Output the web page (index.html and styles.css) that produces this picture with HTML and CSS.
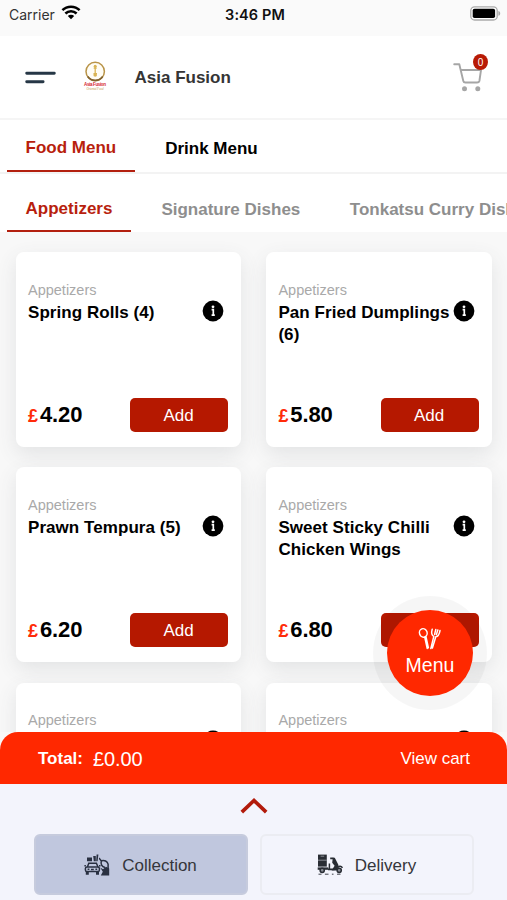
FILE: index.html
```html
<!DOCTYPE html>
<html lang="en">
<head>
<meta charset="utf-8">
<title>Asia Fusion</title>
<link rel="stylesheet" href="styles.css">
</head>
<body>
<svg class="defs" aria-hidden="true">
  <symbol id="info" viewBox="0 0 22 22">
    <circle cx="11" cy="11" r="10.4" fill="#000"/>
    <circle cx="11" cy="6.8" r="1.4" fill="#fff"/>
    <path d="M9.6 9.7h1.7v5.3M9.6 15.2h3.2" fill="none" stroke="#fff" stroke-width="1.7"/>
  </symbol>
</svg>
<div class="app">
  <div class="status">
    <div class="carrier"><span>Carrier</span>
      <svg width="20" height="15" viewBox="0 0 20 15" fill="none" stroke="#000" stroke-width="2.5"><path d="M1.4 5.2a12.2 12.2 0 0 1 17.2 0M4.4 8.5a7.9 7.9 0 0 1 11.2 0"/><path d="M10 14.3 6.8 11a4.5 4.5 0 0 1 6.4 0z" fill="#000" stroke="none"/></svg>
    </div>
    <div class="clock">3:46 PM</div>
    <svg class="battery" width="31" height="15" viewBox="0 0 31 15"><rect x=".8" y=".8" width="26.4" height="13.2" rx="3.8" fill="#fff" stroke="#aaa" stroke-width="1.3"/><rect x="2.7" y="2.7" width="22.4" height="9.4" rx="1.8"/><path d="M28.4 5c2.4.6 2.4 4.2 0 4.8z" fill="#aaa"/></svg>
  </div>
  <header class="header">
    <svg width="31" height="13" viewBox="0 0 31 13" stroke="#263746" stroke-width="2.9" stroke-linecap="round"><path d="M1.7 2.2h27.6M1.7 10.8h16.4"/></svg>
    <svg class="logo" width="24" height="30" viewBox="0 0 24 30">
      <circle cx="12.2" cy="10.5" r="9.2" fill="#fffdf5" stroke="#b99448" stroke-width="1.5"/>
      <path d="M4.7 15.6a9.2 9.2 0 0 0 15 0" fill="none" stroke="#7f602d" stroke-width="1.7"/>
      <path d="M12.2 4.2v10.2M10.7 7.1h3M10.5 12.6h3.5" stroke="#d9b455" stroke-width="1.3"/>
      <circle cx="12.2" cy="5.2" r="1.5" fill="#d9b455"/><circle cx="12.2" cy="14" r="1.8" fill="#d9b455"/>
      <text x="12" y="24.6" text-anchor="middle" textLength="22" class="logo-name">Asia Fusion</text>
      <text x="12" y="29" text-anchor="middle" textLength="17" class="logo-sub">Oriental Food</text>
    </svg>
    <h1>Asia Fusion</h1>
    <div class="cart">
      <svg width="31" height="30" viewBox="0 0 31 30" fill="none" stroke="#a6a6a6" stroke-width="1.9" stroke-linejoin="round" stroke-linecap="round"><path d="M1.2 2.2h5.1l4 16.8c.3 1.2.9 1.5 2 1.5h11.8c1.2 0 2-.4 2.3-1.5L28 8H7.8"/><g fill="#a6a6a6" stroke="none"><circle cx="11.5" cy="26.8" r="2.5"/><circle cx="24.8" cy="26.8" r="2.5"/></g></svg>
      <span class="badge">0</span>
    </div>
  </header>
  <nav class="tabs main"><a class="tab active">Food Menu</a><a class="tab">Drink Menu</a></nav>
  <nav class="tabs sub"><a class="tab active">Appetizers</a><a class="tab">Signature Dishes</a><a class="tab">Tonkatsu Curry Dishes</a></nav>
  <main class="list">
    <article class="card"><p class="cat">Appetizers</p><div class="title"><h2>Spring Rolls (4)</h2><svg class="info"><use href="#info"/></svg></div><div class="buy"><p class="price"><span>£</span>4.20</p><button>Add</button></div></article>
    <article class="card"><p class="cat">Appetizers</p><div class="title"><h2>Pan Fried Dumplings (6)</h2><svg class="info"><use href="#info"/></svg></div><div class="buy"><p class="price"><span>£</span>5.80</p><button>Add</button></div></article>
    <article class="card"><p class="cat">Appetizers</p><div class="title"><h2>Prawn Tempura (5)</h2><svg class="info"><use href="#info"/></svg></div><div class="buy"><p class="price"><span>£</span>6.20</p><button>Add</button></div></article>
    <article class="card"><p class="cat">Appetizers</p><div class="title"><h2>Sweet Sticky Chilli Chicken Wings</h2><svg class="info"><use href="#info"/></svg></div><div class="buy"><p class="price"><span>£</span>6.80</p><button>Add</button></div></article>
    <article class="card"><p class="cat">Appetizers</p><div class="title"><svg class="info"><use href="#info"/></svg></div></article>
    <article class="card"><p class="cat">Appetizers</p><div class="title"><svg class="info"><use href="#info"/></svg></div></article>
  </main>
  <footer class="bottom">
    <div class="total"><b>Total:</b><span class="sum">£0.00</span><span class="view">View cart</span></div>
    <div class="options">
      <svg class="chevron" width="28" height="17" viewBox="0 0 28 17" fill="none" stroke="#b21a0b" stroke-width="3.7"><path d="m1.8 15.1 12.2-11.6 12.2 11.6"/></svg>
      <div class="modes">
        <div class="mode selected">
          <svg width="26" height="22" viewBox="0 0 26 22" fill="none" stroke="#293041" stroke-width="1.5">
            <path d="M3.4 13 4.8 9.3h7.6l1.6 3.7"/><rect x="1.4" y="13" width="14" height="4.6" rx="1.6"/>
            <path d="M1.8 17.4h3v3.4h-3zM12 17.4h3v3.4h-3z" fill="#293041" stroke="none"/><path d="M3.6 15.3h1.8M11.4 15.3h1.8M7 15.5h2.8M.4 11.8h1.5M15 11.8h1.5"/>
            <path d="M3 3.4h5v3.8H3zM9.2 2h2.6v5.2H9.8zM12.6.4h1.8l-.8 6.8h-1.4z" fill="#293041" stroke="none"/>
            <path d="M15 4.2c1 .2 1.2 2.3 2.6 2.6 2.8-1 5.7.5 6.5 3.3v5"/><path d="M17.4 7c-1 3 .4 5.8 3.6 6.6"/>
            <path d="M16.2 13.6 19 15.2l3-2.4 3.2 1.8v7h-8.4l2-3.8z" fill="#293041" stroke="none"/>
          </svg><span>Collection</span>
        </div>
        <div class="mode">
          <svg width="26" height="21" viewBox="0 0 26 21" fill="none" stroke="#292d34" stroke-width="1.5">
            <path d="M1 .6h8.8v12H1z" fill="#292d34" stroke="none"/><path d="M3.6 2.2h3.6M1 6.2h8.8" stroke="#b0b3bc" stroke-width=".7"/>
            <path d="M.7 13.4h10.6v2.4H.7z" fill="#292d34" stroke="none"/><path d="M13.2 4.4h3.4M11 15.4h6.4" stroke-width="1.9"/><path d="M15.8 3.8h2l3.8 7.4-1.8 5.2h-5.2l3-4.6-2.4-3z" fill="#292d34" stroke="none"/><path d="M12.4 9.6v5.6M20.4 14.4c.9-2.8 3.8-2.8 5-.6"/>
            <circle cx="5.2" cy="16.3" r="2.1" fill="#888c95"/><circle cx="22.2" cy="16.3" r="2.1" fill="#888c95"/><path d="M1.5 20.2h3m3.4 0h3.6m3.4 0h1.6m3.5 0h3.5" stroke-width=".9"/>
          </svg><span>Delivery</span>
        </div>
      </div>
    </div>
  </footer>
  <div class="menu-fab">
    <svg width="24" height="24" viewBox="0 0 24 24" fill="none" stroke="#fff" stroke-width="1.5" stroke-linecap="round" stroke-linejoin="round"><ellipse cx="5.3" cy="5.9" rx="3.8" ry="4.3" transform="rotate(-20 5.3 5.9)"/><path d="M6.8 10.4 9.2 21.4M8 9.8 10.4 20.8M14.2 2.2c-1 3.4-.6 6 1.6 7.2L12.8 21.6M17.8 2.4 16.6 7.4M19.8 3l-1.4 4.4M22 3.6c-.6 3.6-2 5.8-4.2 6.2L14.4 21"/></svg>
    <span>Menu</span>
  </div>
</div>
</body>
</html>
```
FILE: styles.css
```css
* { box-sizing: border-box; }
body { margin: 0; font-family: "Liberation Sans", Arial, sans-serif; }
h1, h2, p { margin: 0; }
.defs { position: absolute; width: 0; height: 0; }
.app { position: relative; width: 507px; height: 900px; overflow: hidden; display: flex; flex-direction: column; background: #f8f8f8; }

.status { flex: none; height: 36px; padding: 0 6px 8px 9px; display: grid; grid-template-columns: 1fr auto 1fr; align-items: center; background: #fafafa; font-family: Inter, sans-serif; color: #111; }
.carrier { display: flex; align-items: center; gap: 6px; font-size: 14px; color: #333; }
.carrier svg { margin-top: -3px; }
.clock { font-size: 14.5px; font-weight: 600; letter-spacing: .1px; }
.battery { justify-self: end; margin-top: -1px; }

.header { flex: none; height: 84px; padding: 0 24px 0 25px; display: flex; align-items: center; background: #fff; border-bottom: 2px solid #f5f5f5; }
.logo { margin: -3px 0 0 27px; }
.logo-name { font: bold 4.5px "Liberation Sans", sans-serif; fill: #d51e30; }
.logo-sub { font: italic 3.2px "Liberation Serif", serif; fill: #c49a50; }
.header h1 { margin: 2px 0 0 27.5px; font-size: 17px; color: #353535; }
.cart { position: relative; margin-left: auto; width: 30px; height: 30px; }
.cart svg { display: block; }
.badge { position: absolute; left: 20px; top: -8px; width: 15px; height: 16px; border-radius: 50%; background: #b81a05; color: #fff; font-size: 10px; line-height: 17px; text-align: center; }

.tabs { flex: none; display: flex; padding-left: 7px; background: #fff; font-size: 17px; font-weight: bold; white-space: nowrap; overflow: hidden; }
.main { height: 54px; gap: 12px; border-bottom: 2px solid #f3f3f3; }
.sub { height: 58px; gap: 12px; color: #8e8e8e; }
.tab { flex: none; padding: 0 18.5px; line-height: 55px; }
.main .tab + .tab { line-height: 57px; }
.sub .tab { line-height: 69px; }
.sub .tab + .tab { line-height: 71px; padding-right: 19px; }
.tab.active { color: #b81f0e; border-bottom: 2px solid #b3200f; }

.list { flex: none; height: 500px; overflow: hidden; display: grid; grid-template-columns: 225px 226px; grid-auto-rows: 195px; gap: 20.3px 25px; padding: 20px 16px; }
.card { display: flex; flex-direction: column; padding: 27.5px 13px 15px 12px; background: #fff; border-radius: 8px; box-shadow: 0 7px 20px rgba(70, 82, 90, .12); }
.card:nth-child(even) { padding-right: 13.5px; padding-left: 12.4px; }
.cat { font-size: 14.5px; line-height: 20px; color: #a9a9a9; }
.title { display: flex; justify-content: flex-end; padding-right: 4px; }
.title h2 { flex: 1; margin-right: -4px; padding-top: 2px; font-size: 17px; line-height: 22px; letter-spacing: .06px; color: #000; }
.info { flex: none; width: 22px; height: 22px; }
.buy { display: flex; align-items: center; justify-content: space-between; margin-top: auto; height: 34px; }
.price { font-size: 22px; font-weight: bold; line-height: 34px; padding-top: 1px; letter-spacing: -.1px; }
.price span { font-size: 18px; color: #ff2b09; margin-right: 2px; }
.buy button { width: 98px; height: 34px; padding: 1px 1px 0 0; border: 0; border-radius: 5px; background: #b51800; color: #fff; font: 17px "Liberation Sans", sans-serif; }

.bottom { flex: none; height: 168px; position: relative; }
.total { height: 52px; display: flex; align-items: center; padding: 2px 37px 0 38px; color: #fff; background: #ff2800; border-radius: 18px 18px 0 0; font-size: 17px; }
.sum { margin-left: 10px; font-size: 20px; letter-spacing: -.1px; }
.view { margin-left: auto; }
.options { height: 116px; background: #f3f4fc; display: flex; flex-direction: column; align-items: center; padding-top: 13px; }
.modes { display: flex; gap: 12px; margin-top: 20px; }
.mode { width: 214px; height: 61px; display: flex; align-items: center; justify-content: center; gap: 12px; border: 2px solid #ebecf2; border-radius: 6px; font-size: 17px; color: #35363b; }
.mode.selected { background: #c0c7de; border-color: #c6cbdd; }
.mode span { padding-top: 2px; }

.menu-fab { position: absolute; left: 387px; top: 610px; width: 86px; height: 86px; border-radius: 50%; display: flex; flex-direction: column; align-items: center; padding-top: 17px; background: #ff2800; color: #fff; box-shadow: 0 0 0 14px rgba(0, 0, 0, .035); font-size: 19.5px; line-height: 28px; }
.menu-fab svg { flex: none; }
```
